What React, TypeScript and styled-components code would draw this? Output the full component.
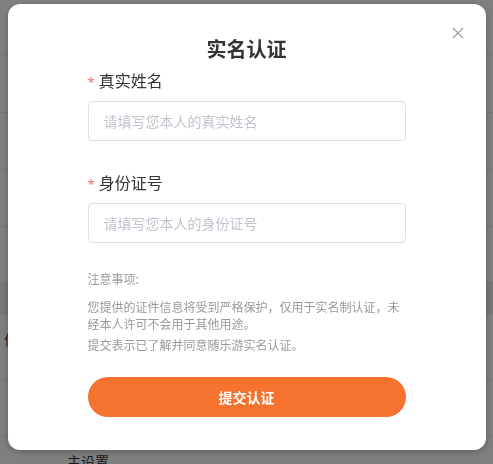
import React from 'react';
import styled, { createGlobalStyle } from 'styled-components';

const GlobalStyle = createGlobalStyle`
  html, body {
    margin: 0;
    padding: 0;
    background: #fff;
    font-family: "Noto Sans", "Noto Sans CJK SC", sans-serif;
  }
`;

const Page = styled.div`
  width: 493px;
  height: 464px;
  overflow: hidden;
  display: flex;
  flex-direction: column;
`;

const Row = styled.div<{ $h: number; $band?: boolean; $indent?: number }>`
  flex: none;
  height: ${p => p.$h}px;
  box-sizing: border-box;
  border-bottom: 1px solid #ececec;
  background: ${p => (p.$band ? '#eeeeee' : '#fff')};
  padding: 15px 0 0 ${p => p.$indent ?? 0}px;
  font-size: 14px;
  line-height: 20px;
  color: #333;
`;

const Overlay = styled.div`
  position: fixed;
  inset: 0;
  background: rgba(0, 0, 0, 0.5);
  display: flex;
  justify-content: center;
  align-items: flex-start;
  padding-top: 4px;
`;

const Dialog = styled.div`
  position: relative;
  width: 478px;
  box-sizing: border-box;
  padding: 32px 80px 33px;
  background: #fff;
  border-radius: 12px;
  box-shadow: 0 2px 6px rgba(0, 0, 0, 0.25);
  display: flex;
  flex-direction: column;
`;

const Close = styled.button`
  position: absolute;
  top: 23px;
  right: 22px;
  width: 12px;
  height: 12px;
  padding: 0;
  border: none;
  background: none;
  cursor: pointer;
  display: flex;
  svg {
    width: 12px;
    height: 12px;
  }
`;

const Title = styled.h2`
  margin: 0;
  font-size: 20px;
  line-height: 28px;
  font-weight: 700;
  color: #333;
  text-align: center;
`;

const Field = styled.div<{ $top: number }>`
  display: flex;
  flex-direction: column;
  margin-top: ${p => p.$top}px;
`;

const Label = styled.label`
  display: flex;
  align-items: baseline;
  font-size: 16px;
  line-height: 22px;
  color: #333;
  margin-bottom: 8px;

  i {
    font-style: normal;
    font-size: 13px;
    color: #f56c6c;
    margin-right: 4px;
  }
`;

const Input = styled.input`
  height: 40px;
  box-sizing: border-box;
  border: 1px solid #dcdfe6;
  border-radius: 4px;
  padding: 0 15px;
  font-family: inherit;
  font-size: 14px;
  color: #333;
  outline: none;

  &::placeholder {
    color: #c0c4cc;
  }
`;

const Notes = styled.div`
  margin-top: 28px;
  font-size: 12px;
  color: #999;

  h4 {
    margin: 0 0 10px;
    font-size: 12px;
    line-height: 18px;
    font-weight: 400;
  }

  p {
    margin: 0 0 4px;
    line-height: 17px;
  }
`;

const Submit = styled.button`
  margin-top: 19px;
  height: 40px;
  border: none;
  border-radius: 20px;
  background: #f5732f;
  color: #fff;
  font-family: inherit;
  font-size: 14px;
  font-weight: 700;
  cursor: pointer;
`;

const App = () => {
  return (
    <>
      <GlobalStyle />
      <Page>
        <Row $h={55} />
        <Row $h={58} />
        <Row $h={57} />
        <Row $h={57} />
        <Row $h={56} />
        <Row $h={32} $band />
        <Row $h={65} $indent={4}>信息</Row>
        <Row $h={57} />
        <Row $h={40} $indent={67}>主设置</Row>
      </Page>
      <Overlay>
        <Dialog>
          <Close aria-label='关闭'>
            <svg viewBox='0 0 12 12' fill='none' stroke='#999' strokeWidth='1.1'>
              <path d='M1 1 L11 11 M11 1 L1 11' />
            </svg>
          </Close>
          <Title>实名认证</Title>
          <Field $top={6}>
            <Label>
              <i>*</i>真实姓名
            </Label>
            <Input placeholder='请填写您本人的真实姓名' />
          </Field>
          <Field $top={31}>
            <Label>
              <i>*</i>身份证号
            </Label>
            <Input placeholder='请填写您本人的身份证号' />
          </Field>
          <Notes>
            <h4>注意事项:</h4>
            <p>您提供的证件信息将受到严格保护，仅用于实名制认证，未经本人许可不会用于其他用途。</p>
            <p>提交表示已了解并同意随乐游实名认证。</p>
          </Notes>
          <Submit>提交认证</Submit>
        </Dialog>
      </Overlay>
    </>
  );
};

export default App;
